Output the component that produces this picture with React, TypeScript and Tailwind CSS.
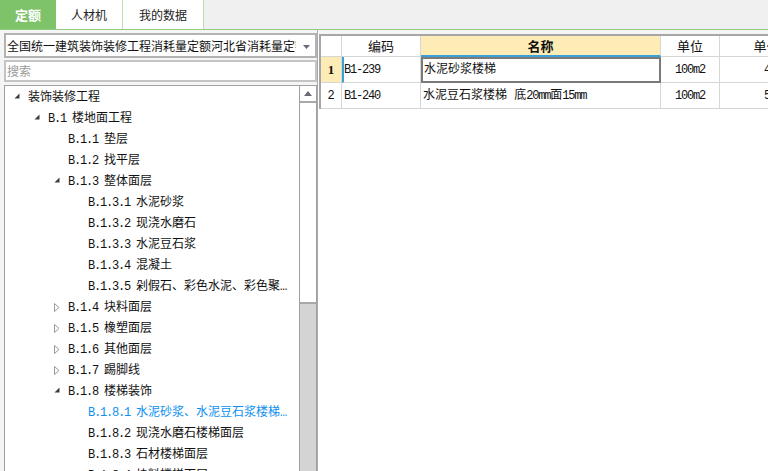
type Node = {
  code?: string;
  name: string;
  level: number;
  state: "open" | "closed" | "leaf";
  active?: boolean;
};

const tree: Node[] = [
  { name: "装饰装修工程", level: 0, state: "open" },
  { code: "B.1", name: "楼地面工程", level: 1, state: "open" },
  { code: "B.1.1", name: "垫层", level: 2, state: "leaf" },
  { code: "B.1.2", name: "找平层", level: 2, state: "leaf" },
  { code: "B.1.3", name: "整体面层", level: 2, state: "open" },
  { code: "B.1.3.1", name: "水泥砂浆", level: 3, state: "leaf" },
  { code: "B.1.3.2", name: "现浇水磨石", level: 3, state: "leaf" },
  { code: "B.1.3.3", name: "水泥豆石浆", level: 3, state: "leaf" },
  { code: "B.1.3.4", name: "混凝土", level: 3, state: "leaf" },
  { code: "B.1.3.5", name: "剁假石、彩色水泥、彩色聚…", level: 3, state: "leaf" },
  { code: "B.1.4", name: "块料面层", level: 2, state: "closed" },
  { code: "B.1.5", name: "橡塑面层", level: 2, state: "closed" },
  { code: "B.1.6", name: "其他面层", level: 2, state: "closed" },
  { code: "B.1.7", name: "踢脚线", level: 2, state: "closed" },
  { code: "B.1.8", name: "楼梯装饰", level: 2, state: "open" },
  { code: "B.1.8.1", name: "水泥砂浆、水泥豆石浆楼梯…", level: 3, state: "leaf", active: true },
  { code: "B.1.8.2", name: "现浇水磨石楼梯面层", level: 3, state: "leaf" },
  { code: "B.1.8.3", name: "石材楼梯面层", level: 3, state: "leaf" },
  { code: "B.1.8.4", name: "块料楼梯面层", level: 3, state: "leaf" },
];

const indent = ["pl-[9px]", "pl-[29px]", "pl-[49px]", "pl-[69px]"];

const mono = "font-['Liberation_Mono','Noto_Sans_CJK_SC',monospace]";
const sans = "font-['Noto_Sans_CJK_SC','Liberation_Sans',sans-serif]";

function Arrow({ state }: { state: Node["state"] }) {
  if (state === "open")
    return (
      <svg width="6" height="6" viewBox="0 0 6 6" className="-mt-[3px]">
        <polygon points="5.5,0.5 5.5,5.5 0.5,5.5" fill="#3c3c3c" />
      </svg>
    );
  if (state === "closed")
    return (
      <svg width="6" height="9" viewBox="0 0 6 9">
        <polygon points="0.5,0.5 5,4.5 0.5,8.5" fill="#fff" stroke="#9a9a9a" />
      </svg>
    );
  return null;
}

function TreeRow({ n }: { n: Node }) {
  return (
    <div className={`flex items-center h-[21px] whitespace-nowrap ${indent[n.level]}`}>
      <div className="w-[14px] flex items-center">
        <Arrow state={n.state} />
      </div>
      <span className={`${mono} text-[12px] ${n.active ? "text-[#0d8ff0]" : "text-[#111]"}`}>
        {n.code && <span className="tracking-[-1.2px]">{n.code} </span>}
        {n.name}
      </span>
    </div>
  );
}

function Tabs() {
  return (
    <div className={`h-[29px] flex bg-[#f0f0f0] ${sans} text-[12px]`}>
      <div className="w-[56px] bg-[#7ec36a] text-white font-bold text-[13px] flex items-center justify-center">定额</div>
      <div className="w-[67px] bg-white border-r border-[#b9e0ad] flex items-center justify-center text-[#222]">人材机</div>
      <div className="w-[81px] bg-white border-r border-[#b9e0ad] flex items-center justify-center text-[#222]">我的数据</div>
    </div>
  );
}

function Grid() {
  const cell = "border-r border-b border-[#d6d6d6] flex items-center";
  return (
    <div className={`border-t-2 border-l-2 border-[#a6a6a6] ${mono} text-[12px] text-[#111]`}>
      <div className={`flex h-[21px] ${sans} text-[13px]`}>
        <div className={`${cell} w-[21px]`} />
        <div className={`${cell} w-[79px] justify-center`}>编码</div>
        <div className={`${cell} w-[240px] justify-center bg-[#fdecb5] font-bold border-b-2 border-b-[#3aa0d8]`}>名称</div>
        <div className={`${cell} w-[59px] justify-center`}>单位</div>
        <div className={`${cell} w-[94px] justify-center shrink-0`}>单价</div>
      </div>
      <div className="flex h-[26px]">
        <div className={`${cell} w-[21px] justify-center bg-[#fdecb5] font-bold font-['Liberation_Serif',serif] text-[13px]`}>1</div>
        <div className={`${cell} w-[79px] pl-0 border-l-2 border-l-[#3aa0d8]`}>
          <span className="tracking-[-1.2px]">B1-239</span>
        </div>
        <div className="w-[240px] border-2 border-[#7a7a7a] flex items-center pl-[1px]">水泥砂浆楼梯</div>
        <div className={`${cell} w-[59px] justify-center`}>
          <span className="tracking-[-1.2px]">100m2</span>
        </div>
        <div className={`${cell} w-[94px] justify-end pr-[7px] shrink-0`}>
          <span className="tracking-[-1.2px]">4316.77</span>
        </div>
      </div>
      <div className="flex h-[26px]">
        <div className={`${cell} w-[21px] justify-center`}>2</div>
        <div className={`${cell} w-[79px] pl-[2px]`}>
          <span className="tracking-[-1.2px]">B1-240</span>
        </div>
        <div className={`${cell} w-[240px] pl-[2px]`}>
          水泥豆石浆楼梯 底<span className="tracking-[-1.2px]">20mm</span>面<span className="tracking-[-1.2px]">15mm</span>
        </div>
        <div className={`${cell} w-[59px] justify-center`}>
          <span className="tracking-[-1.2px]">100m2</span>
        </div>
        <div className={`${cell} w-[94px] justify-end pr-[7px] shrink-0`}>
          <span className="tracking-[-1.2px]">5128.40</span>
        </div>
      </div>
    </div>
  );
}

export default function App() {
  return (
    <div className="w-[768px] h-[471px] overflow-hidden bg-[#f5f5f5] flex flex-col">
      <Tabs />
      <div className="h-[1px] bg-[#8fcc7e]" />
      <div className="flex-1 flex min-h-0">
        {/* left: quota library tree */}
        <div className="w-[317px] shrink-0 pl-[4px] pt-[3px] flex flex-col">
          <div className="h-[25px] bg-white border-2 border-[#b3b3b3] flex items-center relative overflow-hidden">
            <span className={`${sans} text-[12px] text-[#111] pl-[1px] whitespace-nowrap w-[290px] overflow-hidden`}>
              全国统一建筑装饰装修工程消耗量定额河北省消耗量定额
            </span>
            <svg width="7" height="4" viewBox="0 0 7 4" className="absolute right-[5px] top-[10px]">
              <polygon points="0,0 7,0 3.5,4" fill="#6b6b78" />
            </svg>
          </div>
          <div className="h-[22px] mt-[2px] bg-white border-2 border-[#c4c4c4] flex items-center">
            <span className={`${sans} text-[12px] text-[#9a9a9a] pl-[1px]`}>搜索</span>
          </div>
          <div className="flex-1 mt-[3px] bg-white border border-[#a0a0a0] border-b-0 flex min-h-0">
            <div className="flex-1 pt-[1px] overflow-hidden">
              {tree.map((n, i) => (
                <TreeRow key={i} n={n} />
              ))}
            </div>
            <div className="w-[17px] flex flex-col border-l border-[#a0a0a0] bg-[#d4d4d4]">
              <div className="h-[17px] bg-white border-b-2 border-[#a8a8a8] flex items-center justify-center">
                <svg width="8" height="5" viewBox="0 0 8 5">
                  <polygon points="0,5 8,5 4,0" fill="#6b6b78" />
                </svg>
              </div>
              <div className="h-[201px] bg-white border-b-2 border-[#a8a8a8]" />
            </div>
          </div>
        </div>
        {/* splitter */}
        <div className="w-[2px] shrink-0 border-l border-[#a4aab4] bg-white" />
        {/* right: quota items grid */}
        <div className="flex-1 pt-[4px] overflow-hidden">
          <div className="w-[520px] bg-white h-full">
            <Grid />
          </div>
        </div>
      </div>
    </div>
  );
}
